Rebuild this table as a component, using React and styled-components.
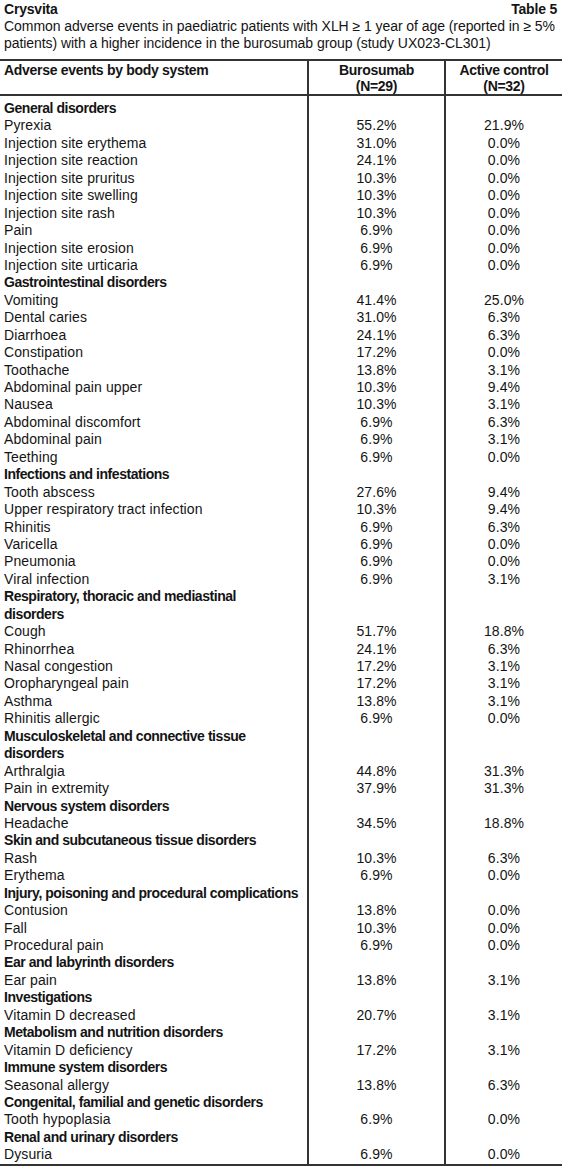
import React from 'react';
import styled, { createGlobalStyle } from 'styled-components';

const GlobalStyle = createGlobalStyle`
    html, body {
        margin: 0;
        padding: 0;
        background: #ffffff;
    }
    body {
        font-family: "Liberation Sans Narrow", "Liberation Sans", Arial, sans-serif;
        color: #141414;
    }
`

const Page = styled.div`
    width: 562px;
    padding-top: 1px;
`

const TitleRow = styled.div`
    display: flex;
    justify-content: space-between;
    padding: 0 5px 0 4px;
    font-weight: bold;
    font-size: 14px;
    letter-spacing: -0.2px;
    line-height: 17px;
`

const Caption = styled.p`
    margin: 0;
    padding: 0 4px;
    font-size: 14px;
    letter-spacing: -0.06px;
    line-height: 17px;
    white-space: nowrap;
`

const Table = styled.table`
    width: 100%;
    table-layout: fixed;
    margin-top: 7px;
    border-collapse: collapse;
    border-top: 2px solid #333;
    border-bottom: 2px solid #333;
    font-size: 14px;
    line-height: 17.43px;
`

const HeadCell = styled.th`
    font-weight: bold;
    letter-spacing: -0.3px;
    padding: 1px 4px 0;
    vertical-align: top;
    text-align: ${p => (p.$left ? 'left' : 'center')};
    border-bottom: 2px solid #333;
    border-left: ${p => (p.$left ? 'none' : '2px solid #333')};
    width: ${p => p.$w};
    line-height: 16px;
`

const Cell = styled.td`
    padding: 0 4px;
    text-align: ${p => (p.$left ? 'left' : 'center')};
    border-left: ${p => (p.$left ? 'none' : '2px solid #333')};
    font-weight: ${p => (p.$group ? 'bold' : 'normal')};
    letter-spacing: ${p => (p.$group ? '-0.45px' : '0.1px')};
    white-space: pre;
    padding-top: ${p => (p.$first ? '4px' : '0')};
`

const data = [
    ['General disorders', [
        ['Pyrexia', '55.2%', '21.9%'],
        ['Injection site erythema', '31.0%', '0.0%'],
        ['Injection site reaction', '24.1%', '0.0%'],
        ['Injection site pruritus', '10.3%', '0.0%'],
        ['Injection site swelling', '10.3%', '0.0%'],
        ['Injection site rash', '10.3%', '0.0%'],
        ['Pain', '6.9%', '0.0%'],
        ['Injection site erosion', '6.9%', '0.0%'],
        ['Injection site urticaria', '6.9%', '0.0%'],
    ]],
    ['Gastrointestinal disorders', [
        ['Vomiting', '41.4%', '25.0%'],
        ['Dental caries', '31.0%', '6.3%'],
        ['Diarrhoea', '24.1%', '6.3%'],
        ['Constipation', '17.2%', '0.0%'],
        ['Toothache', '13.8%', '3.1%'],
        ['Abdominal pain upper', '10.3%', '9.4%'],
        ['Nausea', '10.3%', '3.1%'],
        ['Abdominal discomfort', '6.9%', '6.3%'],
        ['Abdominal pain', '6.9%', '3.1%'],
        ['Teething', '6.9%', '0.0%'],
    ]],
    ['Infections and infestations', [
        ['Tooth abscess', '27.6%', '9.4%'],
        ['Upper respiratory tract infection', '10.3%', '9.4%'],
        ['Rhinitis', '6.9%', '6.3%'],
        ['Varicella', '6.9%', '0.0%'],
        ['Pneumonia', '6.9%', '0.0%'],
        ['Viral infection', '6.9%', '3.1%'],
    ]],
    ['Respiratory, thoracic and mediastinal\ndisorders', [
        ['Cough', '51.7%', '18.8%'],
        ['Rhinorrhea', '24.1%', '6.3%'],
        ['Nasal congestion', '17.2%', '3.1%'],
        ['Oropharyngeal pain', '17.2%', '3.1%'],
        ['Asthma', '13.8%', '3.1%'],
        ['Rhinitis allergic', '6.9%', '0.0%'],
    ]],
    ['Musculoskeletal and connective tissue\ndisorders', [
        ['Arthralgia', '44.8%', '31.3%'],
        ['Pain in extremity', '37.9%', '31.3%'],
    ]],
    ['Nervous system disorders', [
        ['Headache', '34.5%', '18.8%'],
    ]],
    ['Skin and subcutaneous tissue disorders', [
        ['Rash', '10.3%', '6.3%'],
        ['Erythema', '6.9%', '0.0%'],
    ]],
    ['Injury, poisoning and procedural complications', [
        ['Contusion', '13.8%', '0.0%'],
        ['Fall', '10.3%', '0.0%'],
        ['Procedural pain', '6.9%', '0.0%'],
    ]],
    ['Ear and labyrinth disorders', [
        ['Ear pain', '13.8%', '3.1%'],
    ]],
    ['Investigations', [
        ['Vitamin D decreased', '20.7%', '3.1%'],
    ]],
    ['Metabolism and nutrition disorders', [
        ['Vitamin D deficiency', '17.2%', '3.1%'],
    ]],
    ['Immune system disorders', [
        ['Seasonal allergy', '13.8%', '6.3%'],
    ]],
    ['Congenital, familial and genetic disorders', [
        ['Tooth hypoplasia', '6.9%', '0.0%'],
    ]],
    ['Renal and urinary disorders', [
        ['Dysuria', '6.9%', '0.0%'],
    ]],
]

const App = () => {
    const rows = [];
    data.forEach(([group, items], gi) => {
        rows.push({ group: true, name: group, first: gi === 0 });
        items.forEach(it => rows.push({ name: it[0], a: it[1], b: it[2] }));
    });

    return (<>
        <GlobalStyle />
        <Page>
            <TitleRow>
                <span>Crysvita</span>
                <span>Table 5</span>
            </TitleRow>
            <Caption>
                Common adverse events in paediatric patients with XLH ≥ 1 year of age (reported in ≥ 5%<br />
                patients) with a higher incidence in the burosumab group (study UX023-CL301)
            </Caption>
            <Table>
                <thead>
                    <tr>
                        <HeadCell $left $w="299px">Adverse events by body system</HeadCell>
                        <HeadCell $w="127px">Burosumab<br />(N=29)</HeadCell>
                        <HeadCell>Active control<br />(N=32)</HeadCell>
                    </tr>
                </thead>
                <tbody>
                    {rows.map((r, i) => (
                        <tr key={i}>
                            <Cell $left $group={r.group} $first={r.first}>{r.name}</Cell>
                            <Cell $first={r.first}>{r.a}</Cell>
                            <Cell $first={r.first}>{r.b}</Cell>
                        </tr>
                    ))}
                </tbody>
            </Table>
        </Page>
    </>)
}

export default App
